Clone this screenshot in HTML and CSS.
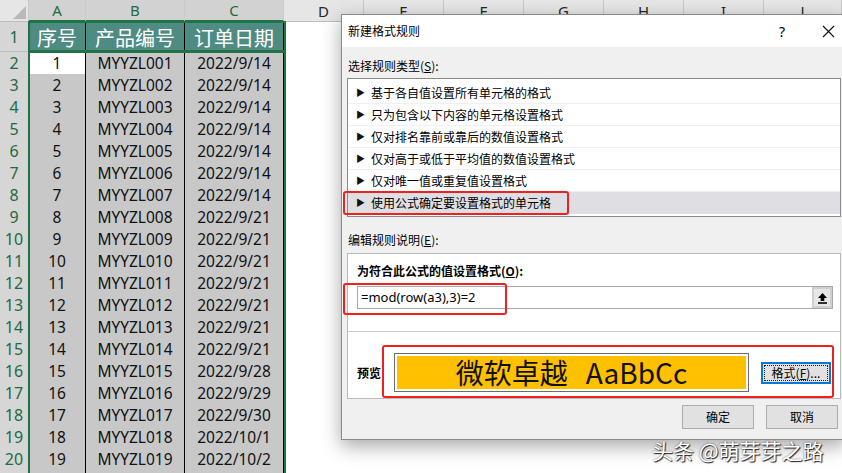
FILE: index.html
```html
<!DOCTYPE html>
<html lang="zh">
<head>
<meta charset="utf-8">
<title>新建格式规则</title>
<link rel="stylesheet" href="styles.css">
</head>
<body>
<div class="sheet">
  <div class="hrow">
    <div class="corner"><svg width="13" height="13" viewBox="0 0 13 13"><polygon points="13,0 13,13 0,13" fill="#b9b9b9"/></svg></div>
    <div class="sel">A</div><div class="sel">B</div><div class="sel">C</div>
    <div>D</div><div>E</div><div>F</div><div>G</div><div>H</div><div>I</div><div>J</div>
  </div>
  <div class="row r1"><div class="rn">1</div><div class="c t">序号</div><div class="c t">产品编号</div><div class="c t">订单日期</div><div></div></div>
  <div class="row"><div class="rn">2</div><div class="c act">1</div><div class="c">MYYZL001</div><div class="c">2022/9/14</div><div></div></div>
  <div class="row"><div class="rn">3</div><div class="c">2</div><div class="c">MYYZL002</div><div class="c">2022/9/14</div><div></div></div>
  <div class="row"><div class="rn">4</div><div class="c">3</div><div class="c">MYYZL003</div><div class="c">2022/9/14</div><div></div></div>
  <div class="row"><div class="rn">5</div><div class="c">4</div><div class="c">MYYZL004</div><div class="c">2022/9/14</div><div></div></div>
  <div class="row"><div class="rn">6</div><div class="c">5</div><div class="c">MYYZL005</div><div class="c">2022/9/14</div><div></div></div>
  <div class="row"><div class="rn">7</div><div class="c">6</div><div class="c">MYYZL006</div><div class="c">2022/9/14</div><div></div></div>
  <div class="row"><div class="rn">8</div><div class="c">7</div><div class="c">MYYZL007</div><div class="c">2022/9/14</div><div></div></div>
  <div class="row"><div class="rn">9</div><div class="c">8</div><div class="c">MYYZL008</div><div class="c">2022/9/21</div><div></div></div>
  <div class="row"><div class="rn">10</div><div class="c">9</div><div class="c">MYYZL009</div><div class="c">2022/9/21</div><div></div></div>
  <div class="row"><div class="rn">11</div><div class="c">10</div><div class="c">MYYZL010</div><div class="c">2022/9/21</div><div></div></div>
  <div class="row"><div class="rn">12</div><div class="c">11</div><div class="c">MYYZL011</div><div class="c">2022/9/21</div><div></div></div>
  <div class="row"><div class="rn">13</div><div class="c">12</div><div class="c">MYYZL012</div><div class="c">2022/9/21</div><div></div></div>
  <div class="row"><div class="rn">14</div><div class="c">13</div><div class="c">MYYZL013</div><div class="c">2022/9/21</div><div></div></div>
  <div class="row"><div class="rn">15</div><div class="c">14</div><div class="c">MYYZL014</div><div class="c">2022/9/21</div><div></div></div>
  <div class="row"><div class="rn">16</div><div class="c">15</div><div class="c">MYYZL015</div><div class="c">2022/9/28</div><div></div></div>
  <div class="row"><div class="rn">17</div><div class="c">16</div><div class="c">MYYZL016</div><div class="c">2022/9/29</div><div></div></div>
  <div class="row"><div class="rn">18</div><div class="c">17</div><div class="c">MYYZL017</div><div class="c">2022/9/30</div><div></div></div>
  <div class="row"><div class="rn">19</div><div class="c">18</div><div class="c">MYYZL018</div><div class="c">2022/10/1</div><div></div></div>
  <div class="row"><div class="rn">20</div><div class="c">19</div><div class="c">MYYZL019</div><div class="c">2022/10/2</div><div></div></div>
  <div class="row"><div class="rn"></div><div class="c"></div><div class="c"></div><div class="c"></div><div></div></div>
  <div class="selbox head"></div>
  <div class="selbox data"></div>
</div>

<div class="dialog">
  <div class="titlebar">
    <span class="title">新建格式规则</span>
    <span class="help">?</span>
    <span class="close"><svg width="13" height="13" viewBox="0 0 13 13"><path d="M1 1 L12 12 M12 1 L1 12" stroke="#111" stroke-width="1.1" fill="none"/></svg></span>
  </div>
  <div class="dbody">
    <div class="lbl">选择规则类型(<u>S</u>):</div>
    <div class="list">
      <div class="item"><span class="arr">▶</span>基于各自值设置所有单元格的格式</div>
      <div class="item"><span class="arr">▶</span>只为包含以下内容的单元格设置格式</div>
      <div class="item"><span class="arr">▶</span>仅对排名靠前或靠后的数值设置格式</div>
      <div class="item"><span class="arr">▶</span>仅对高于或低于平均值的数值设置格式</div>
      <div class="item"><span class="arr">▶</span>仅对唯一值或重复值设置格式</div>
      <div class="item on"><span class="arr">▶</span>使用公式确定要设置格式的单元格</div>
    </div>
    <div class="lbl lbl2">编辑规则说明(<u>E</u>):</div>
    <div class="panel">
      <div class="ptop">
        <div class="blbl">为符合此公式的值设置格式(<u>O</u>):</div>
        <div class="input">
          <span class="itext">=mod(row(a3),3)=2</span>
          <span class="ref"><span class="refin"><svg width="11" height="12" viewBox="0 0 11 12"><path d="M5.5 1 L10 6 H7.3 V9 H3.7 V6 H1 Z" fill="#000"/><rect x="1" y="10.2" width="9" height="1.6" fill="#000"/></svg></span></span>
        </div>
      </div>
      <div class="prow">
        <span class="plbl">预览</span>
        <div class="pbox"><div class="pinner">微软卓越<span class="pgap"></span>AaBbCc</div></div>
        <div class="fbtn"><span class="focus">格式(<u>F</u>)...</span></div>
      </div>
    </div>
    <div class="btns">
      <div class="btn">确定</div>
      <div class="btn">取消</div>
    </div>
  </div>
  <div class="red red1"></div>
  <div class="red red2"></div>
  <div class="red red3"></div>
</div>

<div class="wm">头条 @萌芽芽之路</div>
</body>
</html>
```

FILE: styles.css
```css
html, body {
  margin: 0;
  padding: 0;
}
body {
  width: 842px;
  height: 473px;
  overflow: hidden;
  position: relative;
  background: #fff;
  font-family: "Noto Sans", "Noto Sans CJK SC", sans-serif;
}

/* ---------- spreadsheet ---------- */
.sheet {
  position: relative;
}
.hrow {
  display: grid;
  grid-template-columns: 29px 57px 99px 99px repeat(6, 80px) 78px;
  height: 22px;
  background: #e6e6e6;
}
.hrow > div {
  box-sizing: border-box;
  border-right: 1px solid #c9c9c9;
  border-bottom: 1px solid #bdbdbd;
  display: flex;
  align-items: center;
  justify-content: center;
  font-size: 15px;
  color: #262626;
}
.hrow > .corner {
  align-items: flex-end;
  justify-content: flex-end;
  padding: 0 2px 2px 0;
}
.hrow > .sel {
  background: #d2d2d2;
  color: #1d6b3f;
  border-bottom: 2px solid #217346;
}
.row {
  display: grid;
  grid-template-columns: 29px 57px 99px 99px 1fr;
  height: 22px;
}
.row.r1 {
  height: 30px;
}
.rn {
  box-sizing: border-box;
  background: #d6d6d6;
  color: #1d6b3f;
  border-right: 1px solid #bdbdbd;
  border-bottom: 1px solid #bdbdbd;
  display: flex;
  align-items: center;
  justify-content: center;
  font-size: 16px;
}
.c {
  box-sizing: border-box;
  background: #c8c8c8;
  border-right: 1px solid #000;
  border-bottom: 1px solid #000;
  display: flex;
  align-items: center;
  justify-content: center;
  font-size: 15.5px;
  color: #111;
}
.c.act {
  background: #fff;
}
.c.t {
  background: #4e8b83;
  color: #fff;
  font-family: "Noto Sans CJK SC", sans-serif;
  font-size: 20px;
  border-bottom: none;
}
.selbox {
  position: absolute;
  box-sizing: border-box;
  border: 2px solid #217346;
  pointer-events: none;
}
.selbox.head {
  left: 28px;
  top: 21px;
  width: 258px;
  height: 32px;
}
.selbox.data {
  left: 28px;
  top: 50px;
  width: 258px;
  height: 440px;
}

/* ---------- dialog ---------- */
.dialog {
  position: absolute;
  left: 341px;
  top: 14px;
  width: 505px;
  background: #f0f0f0;
  border: 1px solid #8a8a8a;
  border-right: none;
  box-sizing: border-box;
  box-shadow: 0 6px 18px rgba(0, 0, 0, 0.35);
  font-family: "Noto Sans CJK SC", sans-serif;
  font-size: 12px;
  color: #000;
  padding-bottom: 10px;
}
.titlebar {
  height: 32px;
  background: #fff;
  display: flex;
  align-items: center;
  padding: 0 6px 0 6px;
}
.title {
  flex: 1;
  font-size: 12px;
  line-height: 16px;
}
.help {
  width: 20px;
  text-align: center;
  font-family: "Noto Sans", sans-serif;
  font-size: 14px;
  margin-right: 24px;
}
.close {
  width: 24px;
  height: 16px;
  display: flex;
  align-items: center;
  justify-content: center;
}
.dbody {
  padding: 0 5px 0 5px;
}
.lbl {
  margin-top: 11px;
  line-height: 16px;
  padding-left: 1px;
}
.lbl2 {
  margin-top: 15px;
}
.list {
  margin-top: 4px;
  background: #fff;
  border: 1px solid #8a8a8a;
  padding: 3px 0 2px;
}
.item {
  box-sizing: border-box;
  height: 22px;
  display: flex;
  align-items: center;
  padding-left: 8px;
  line-height: 16px;
  border-bottom: 1px solid #f0f0f0;
}
.item.on {
  background: #dedee3;
  border-bottom-color: #dedee3;
}
.arr {
  width: 15px;
  font-size: 9px;
  line-height: 16px;
  color: #111;
}
.panel {
  margin-top: 5px;
  background: #fff;
  border: 1px solid #b9b9b9;
}
.ptop {
  padding: 9px 0 22px 9px;
}
.blbl {
  font-weight: bold;
  line-height: 16px;
}
.input {
  margin-top: 7px;
  width: 476px;
  height: 23px;
  box-sizing: border-box;
  border: 1px solid #a9a9a9;
  display: flex;
  align-items: stretch;
}
.itext {
  flex: 1;
  font-family: "Noto Sans", sans-serif;
  font-size: 13px;
  line-height: 21px;
  padding-left: 3px;
}
.ref {
  width: 20px;
  background: #cfcfcf;
  display: flex;
  align-items: center;
  justify-content: center;
}
.refin {
  width: 16px;
  height: 17px;
  background: #e6e6e6;
  display: flex;
  align-items: center;
  justify-content: center;
}
.prow {
  border-top: 1px solid #c8c8c8;
  padding: 21px 0 6px 9px;
  display: flex;
  align-items: center;
}
.plbl {
  width: 37px;
  font-weight: bold;
  line-height: 16px;
}
.pbox {
  width: 355px;
  height: 39px;
  box-sizing: border-box;
  border: 1px solid #6d6d6d;
  padding: 2px;
  background: #fff;
}
.pinner {
  height: 100%;
  background: #ffc000;
  display: flex;
  align-items: center;
  justify-content: center;
  font-size: 28px;
  line-height: 33px;
  color: #111;
}
.pgap {
  display: inline-block;
  width: 18px;
}
.fbtn {
  margin-left: 12px;
  width: 70px;
  height: 22px;
  box-sizing: border-box;
  border: 2px solid #0a78d7;
  background: #e1e1e1;
  padding: 1px;
  display: flex;
}
.focus {
  flex: 1;
  border: 1px dotted #222;
  display: flex;
  align-items: center;
  justify-content: center;
  line-height: 14px;
  font-size: 12px;
}
.btns {
  margin-top: 6px;
  display: flex;
  justify-content: flex-end;
  gap: 12px;
  padding-right: 3px;
}
.btn {
  width: 72px;
  height: 24px;
  box-sizing: border-box;
  background: #e1e1e1;
  border: 1px solid #adadad;
  display: flex;
  align-items: center;
  justify-content: center;
  line-height: 16px;
}
.red {
  position: absolute;
  box-sizing: border-box;
  border: 2px solid #ee2020;
  border-radius: 3px;
  pointer-events: none;
}
.red1 {
  left: 1px;
  top: 176px;
  width: 226px;
  height: 24px;
}
.red2 {
  left: 1px;
  top: 268px;
  width: 164px;
  height: 32px;
}
.red3 {
  left: 40px;
  top: 330px;
  width: 452px;
  height: 53px;
}

/* ---------- watermark ---------- */
.wm {
  position: absolute;
  left: 652px;
  top: 437px;
  font-family: "Noto Sans CJK SC", sans-serif;
  font-size: 21px;
  line-height: 26px;
  color: #fff;
  white-space: nowrap;
  text-shadow: 1px 1px 1px #222, 0 0 2px rgba(0, 0, 0, 0.6);
}
```
